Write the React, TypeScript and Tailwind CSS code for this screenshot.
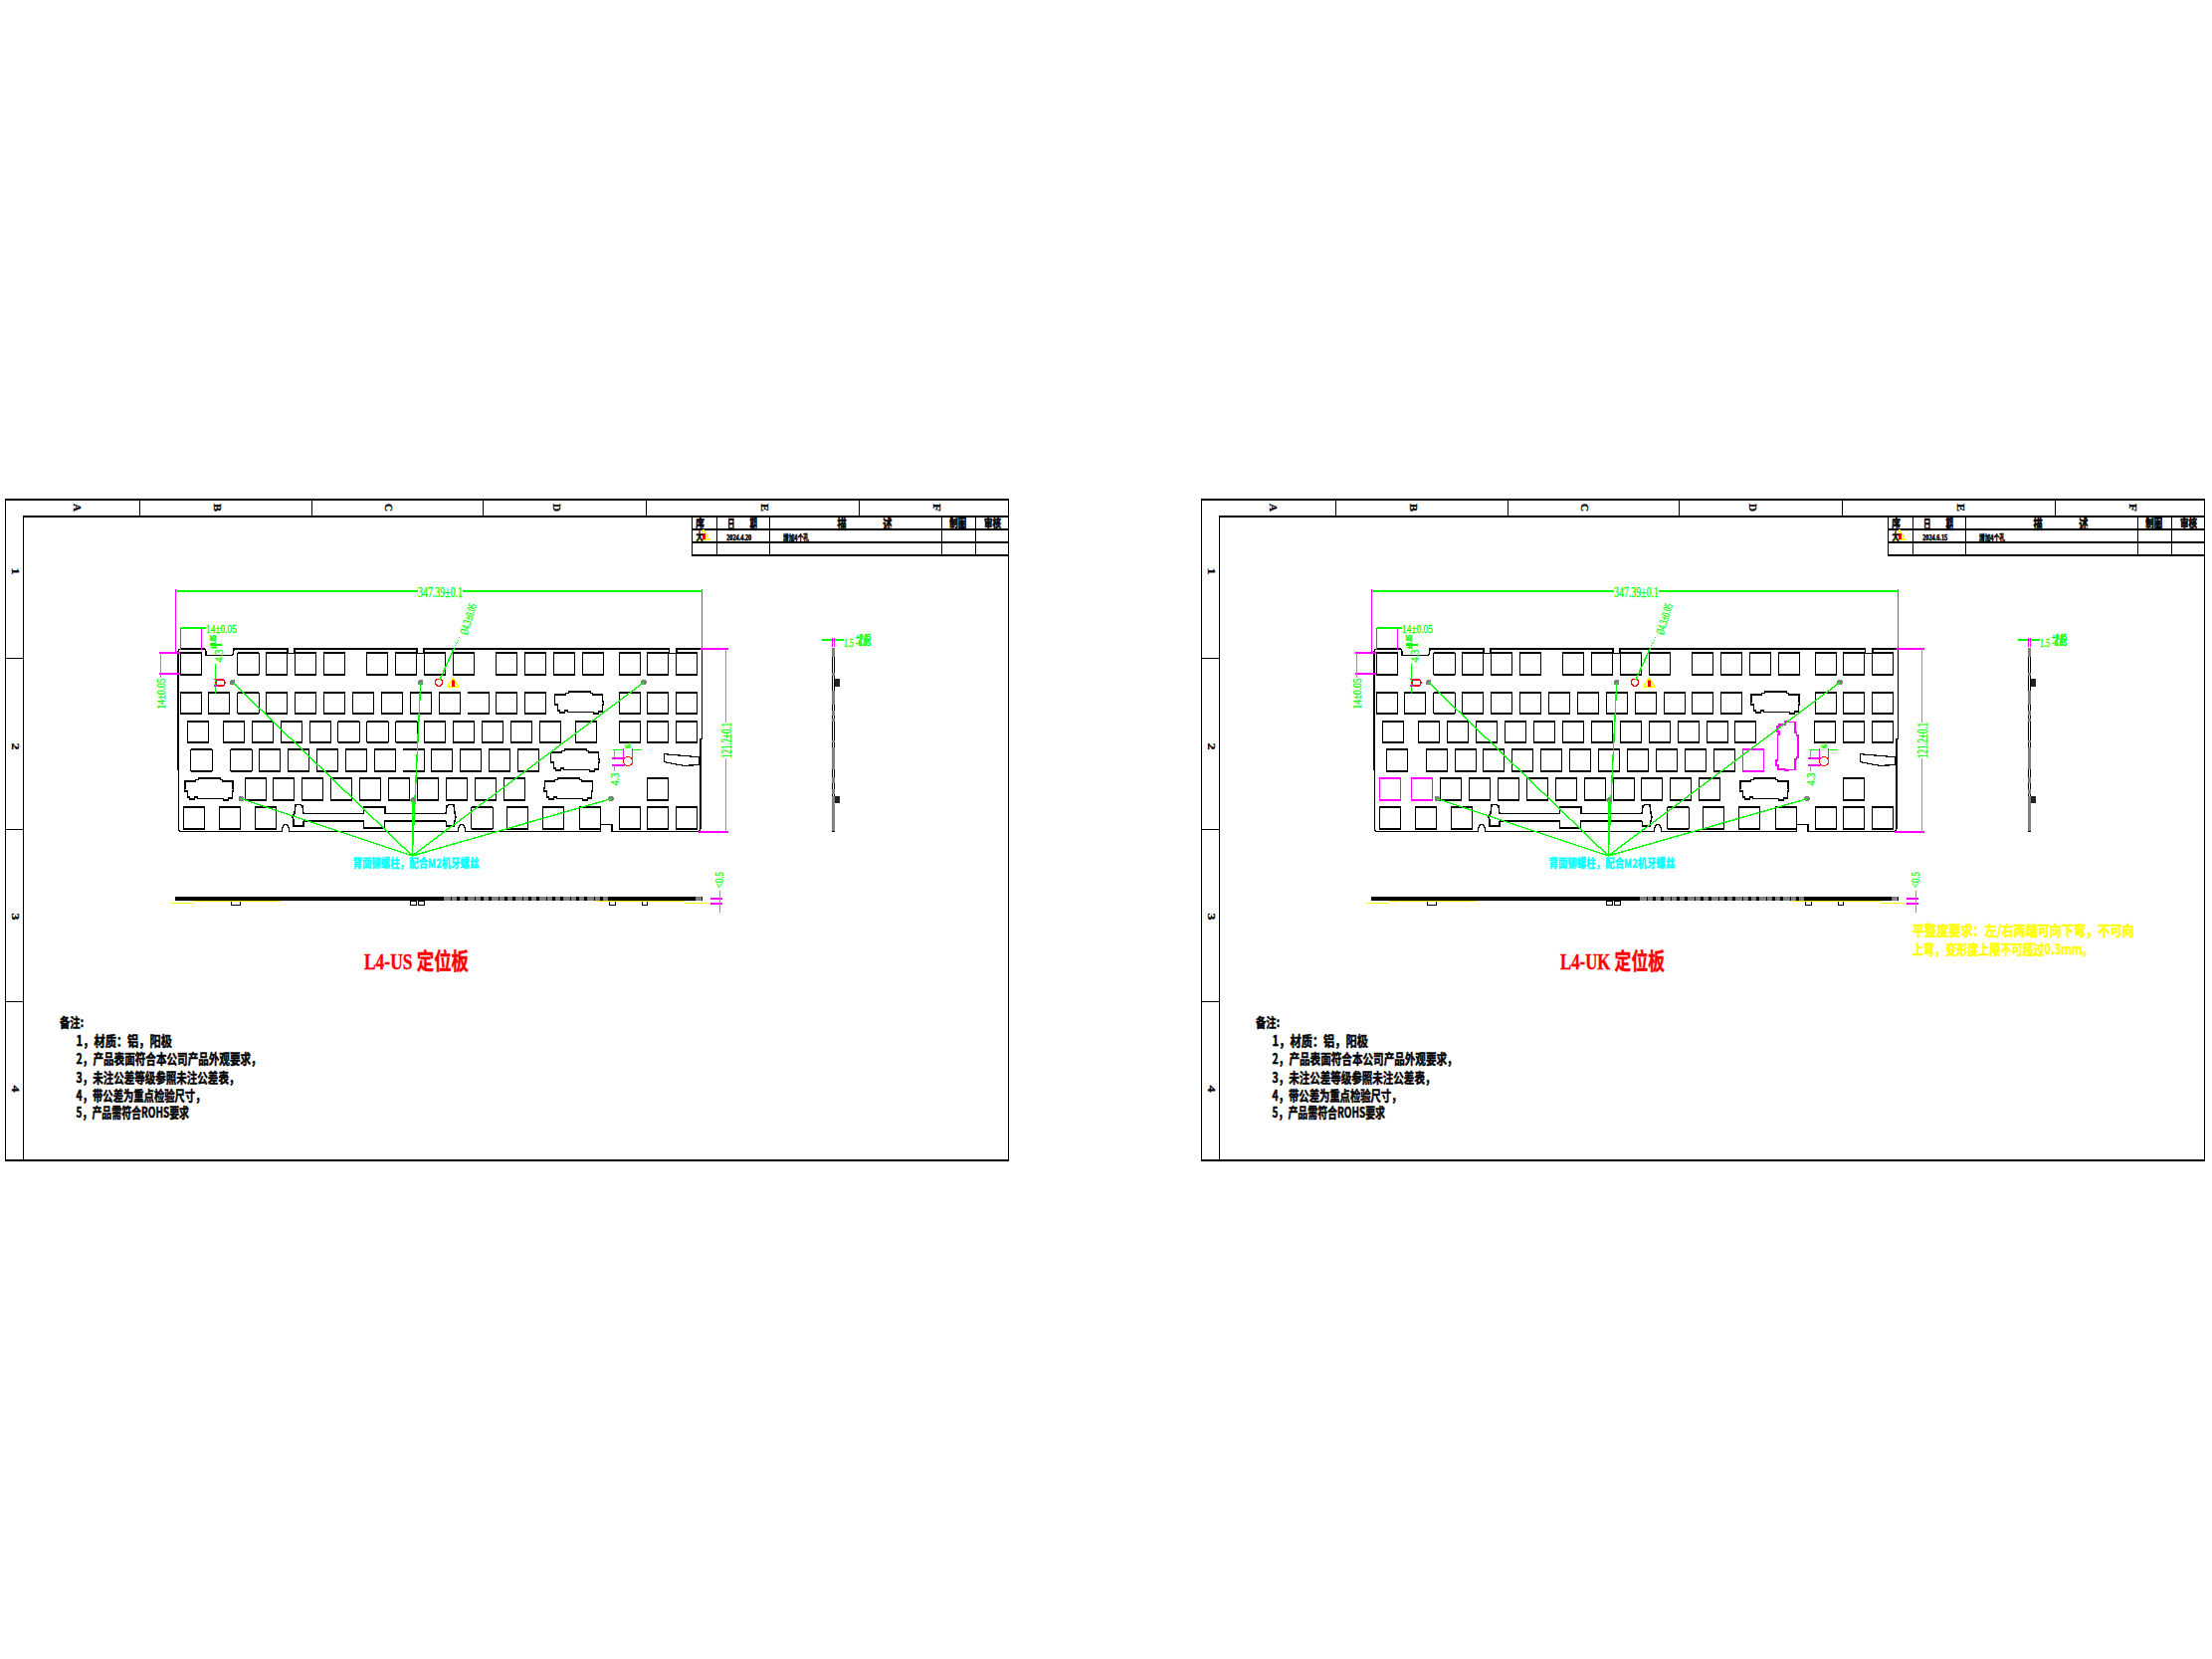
import React from "react";

const INK = "#000000";
const GREEN = "#00ff00";
const PINK = "#ff00ff";
const RED = "#ff0000";
const YELLOW = "#ffff00";
const CYAN = "#00ffff";
const GREY = "#808080";

const KEY = 21.5;
const CJK = "'Liberation Serif','Noto Sans CJK SC',serif";
const CJK_BOLD = "'Noto Sans CJK SC',sans-serif";

// key rows, left edges of each switch hole
const ROW_Y = [656, 695.5, 724.5, 753, 782, 811];
const TOP_ROW = [181.3, 238.7, 267.3, 296.3, 325.3, 368.3, 397.3, 426.3, 455.3, 498.3, 527.3, 556.3, 585.3, 622.3, 650.3, 679.3];
const NUM_ROW = [181.3, 209.3, 238.7, 267.3, 296.3, 325.3, 354.3, 383.3, 412.3, 441.3, 470.3, 498.3, 527.3, 622.3, 650.3, 679.3];
const BOTTOM_ROW = [184.3, 220.3, 256.3, 473.7, 509.3, 545.3, 582.3, 622.3, 650.3, 679.3];

const US_ROWS = {
  r2: [188.3, 224.3, 253.3, 282.3, 311.3, 339.7, 368.7, 397.7, 426.3, 455.3, 484.3, 513.3, 542.3, 578.3, 622.3, 650.3, 679.3],
  r3: [191.7, 231.7, 260.3, 289.3, 318.3, 347.3, 376.3, 405.3, 433.3, 462.3, 491.3, 520.3],
  r4: [246, 274.3, 303.3, 332.3, 361.3, 390.3, 419.3, 448.3, 477.3, 506.3, 650.3],
};
const UK_ROWS = {
  r2: [187.3, 223.3, 252.3, 281.3, 310.3, 339.3, 368.3, 397.3, 426.3, 455.3, 484.3, 513.3, 541.3, 621.3, 650.3, 679.3],
  r3: [191.3, 231.3, 260.3, 288.3, 317.3, 346.3, 375.3, 404.3, 433.3, 462.3, 491.3, 520.3],
  r4: [245, 274, 303, 332.3, 361.3, 390.3, 419.3, 447.3, 476.3, 505.3, 650.3],
};

const STAB = "M0.5,3 H11 V1.5 H14 V0 H36 V1.5 H38 V3 H48.5 V10 H49 V13 H48 V20 H44 V22 H39 V20.5 H13 V19 H10 V21 H5 V19 H3 V13 H0 V10 H0.5 Z";

const PLATE =
  "M179,655 Q179,652 182,652 H205 Q207,652 207,655 V658.3 H233 Q235,658 235,652 H289 V656.7 H296 V652 H419 V656.7 H426 V652 H672.5 V656.7 H680 V652 H705.7 V742.7 H704 V833 L702,835.7 H615 V828.3 H603.5 V835.7 H468 Q467,828 464,828 Q461,828 460,835.7 H291 Q290,828 287,828 Q284,828 283,835.7 H182 Q179.5,835.7 179.5,833 V773 H179 Z";

const SPACE_BAR =
  "M305,817.7 H365.7 V811 H387 V817.7 H448 M305,825 H365.7 V832 H386.7 V825 H448 " +
  "M305,817.7 L304,810 L301,808.3 L297,809 L296,817 L294,821 L295,824 L295,830 H305 V825 " +
  "M448,817.7 L449,810 L452,808.3 L456,809 L457,817 L458,821 L457,825 L456,830 H449 L448,825";

const SLOT = "M667.3,757.7 L702.3,760.7 V768.7 L686.7,769.3 L667.7,765.7 Z";

const SCREWS = [
  [233.7, 685.7],
  [422.7, 685.7],
  [647, 685.7],
  [242.3, 802.7],
  [415, 804],
  [614, 802.7],
];

const SIDE_GREY = [
  [651, 660],
  [676, 679],
  [694, 708],
  [714, 719],
  [722, 725],
  [744, 746],
  [751, 773],
  [781, 787],
  [793, 798],
  [800, 835],
];

const NOTES = [
  { text: "1，材质：铝，阳极", y: 1044.7, end: 173 },
  { text: "2，产品表面符合本公司产品外观要求，", y: 1063, end: 262.7 },
  { text: "3，未注公差等级参照未注公差表，", y: 1081.7, end: 240.4 },
  { text: "4，带公差为重点检验尺寸，", y: 1099.7, end: 206.5 },
  { text: "5，产品需符合ROHS要求", y: 1117.3, end: 190 },
];

const Hl = ({ x1, x2, y, c = INK, w = 2 }: { x1: number; x2: number; y: number; c?: string; w?: number }) => (
  <line x1={x1} x2={x2} y1={y} y2={y} stroke={c} strokeWidth={w} />
);

const Vl = ({ x, y1, y2, c = INK, w = 1 }: { x: number; y1: number; y2: number; c?: string; w?: number }) => (
  <line x1={x} x2={x} y1={y1} y2={y2} stroke={c} strokeWidth={w} />
);

type LabelProps = {
  x: number;
  y: number;
  w: number;
  size: number;
  c?: string;
  rot?: number;
  font?: string;
  bold?: boolean;
  heavy?: number;
  children: React.ReactNode;
};

// all text is squeezed to the measured width, the drawing's font is a narrow one
const Label = ({ x, y, w, size, c = INK, rot = 0, font = CJK, bold = false, heavy = 0.3, children }: LabelProps) => (
  <text
    x={x}
    y={y}
    fontSize={size}
    fontFamily={font}
    fontWeight={bold ? 700 : 400}
    fill={c}
    stroke={c}
    strokeWidth={heavy}
    textAnchor="middle"
    dominantBaseline="central"
    textLength={w}
    lengthAdjust="spacingAndGlyphs"
    transform={rot ? `rotate(${rot} ${x} ${y})` : undefined}
  >
    {children}
  </text>
);

const Key = ({ x, y, c = INK, open = false }: { x: number; y: number; c?: string; open?: boolean }) => (
  <g>
    <Hl x1={x} x2={x + KEY} y={y} c={c} />
    <Hl x1={x} x2={x + KEY} y={y + KEY} c={c} />
    {!open && <Vl x={x} y1={y} y2={y + KEY} c={c} />}
    <Vl x={x + KEY} y1={y} y2={y + KEY} c={c} />
  </g>
);

const Frame = () => (
  <g>
    <Hl x1={5} x2={1014} y={502} />
    <Hl x1={23} x2={1014} y={519} />
    <Hl x1={5} x2={1014} y={1166} />
    <Vl x={5.5} y1={502} y2={1166} />
    <Vl x={23.5} y1={519} y2={1166} />
    <Vl x={1013.5} y1={502} y2={1166} />
    {[140.7, 313.7, 485.3, 649.7, 863.3].map((x) => (
      <Vl key={x} x={x} y1={502} y2={519} />
    ))}
    {[661, 833.7, 1006].map((y) => (
      <Hl key={y} x1={5} x2={24} y={y} w={1} />
    ))}
    {[
      ["A", 78],
      ["B", 219],
      ["C", 391],
      ["D", 560],
      ["E", 769],
      ["F", 942],
    ].map(([t, x]) => (
      <Label key={t} x={x as number} y={510} w={8} size={11} rot={90} bold>
        {t}
      </Label>
    ))}
    {[
      ["1", 574],
      ["2", 750],
      ["3", 921],
      ["4", 1094],
    ].map(([t, y]) => (
      <Label key={t} x={15.7} y={y as number} w={7} size={11} rot={90} bold>
        {t}
      </Label>
    ))}
  </g>
);

const Warning = ({ x, y }: { x: number; y: number }) => (
  <g>
    <polygon points={`${x},${y - 5} ${x + 5.5},${y + 4} ${x - 5.5},${y + 4}`} fill="#ffffff" stroke={YELLOW} strokeWidth={1.5} />
    <rect x={x - 1} y={y - 2.5} width={2.5} height={6} fill={RED} />
  </g>
);

const TitleBlock = ({ date }: { date: string }) => (
  <g>
    {[531.7, 544.7, 557.7].map((y) => (
      <Hl key={y} x1={695} x2={1014} y={y} />
    ))}
    {[695, 720.3, 773.3, 946.3, 980.3].map((x) => (
      <Vl key={x} x={x} y1={519} y2={557.7} />
    ))}
    <Label x={703.5} y={525.3} w={9} size={13} font={CJK_BOLD} bold heavy={0.6}>序</Label>
    <Label x={746} y={525.3} w={30} size={13} font={CJK_BOLD} bold heavy={0.6}>日　　期</Label>
    <Label x={869} y={525.3} w={55} size={13} font={CJK_BOLD} bold heavy={0.6}>描　　　　述</Label>
    <Label x={962.7} y={525.3} w={17} size={11} font={CJK_BOLD} bold heavy={0.6}>制图</Label>
    <Label x={997.5} y={525.3} w={17} size={11} font={CJK_BOLD} bold heavy={0.6}>审核</Label>
    <Warning x={707} y={538} />
    <Label x={703} y={538.5} w={7} size={10} font={CJK_BOLD} bold heavy={0.5}>大</Label>
    <Label x={742.7} y={540} w={25} size={8} bold heavy={0.5}>{date}</Label>
    <Label x={800} y={540.5} w={26} size={9} font={CJK_BOLD} bold heavy={0.5}>增加4个孔</Label>
  </g>
);

const Dimensions = () => (
  <g>
    {/* overall width */}
    <Vl x={176.7} y1={592} y2={655} c={PINK} />
    <Vl x={705.7} y1={592} y2={652} c={PINK} />
    <Hl x1={176.7} x2={420} y={594} c={GREEN} />
    <Hl x1={465} x2={705.7} y={594} c={GREEN} />
    <Label x={442.5} y={595} w={45} size={14} c={GREEN}>347.39±0.1</Label>

    {/* key hole size */}
    <Vl x={181.5} y1={631} y2={653} c={PINK} />
    <Vl x={202.7} y1={631} y2={653} c={PINK} />
    <Hl x1={181.5} x2={207} y={631} c={GREEN} />
    <Label x={222.5} y={631} w={31} size={13} c={GREEN}>14±0.05</Label>
    <Hl x1={159.5} x2={181} y={655.7} c={PINK} />
    <Hl x1={159.5} x2={181} y={676.7} c={PINK} />
    <Vl x={161} y1={656} y2={681} c={GREEN} />
    <Label x={161} y={697} w={31} size={13} c={GREEN} rot={-90}>14±0.05</Label>

    {/* small hole top left */}
    <Label x={219.5} y={659} w={13} size={13} c={GREEN} rot={-90}>4.3</Label>
    <Label x={214} y={645} w={14} size={8} c={GREEN} rot={-90} bold heavy={0.5}>±0.05</Label>
    <Hl x1={211} x2={223} y={648} c={GREEN} w={2} />
    <Vl x={216.7} y1={667} y2={697} c={GREEN} />
    <Hl x1={215} x2={225} y={682.7} c={PINK} w={1.5} />
    <Hl x1={215} x2={225} y={689} c={PINK} w={1.5} />
    <rect x={217} y={683} width={9} height={6} rx={3} fill="none" stroke={RED} strokeWidth={1.2} />

    {/* round hole with leader */}
    <circle cx={441} cy={685.7} r={3.5} fill="none" stroke={RED} strokeWidth={1.2} />
    <line x1={442} y1={683} x2={456} y2={652} stroke={GREEN} strokeWidth={1.5} />
    <line x1={456} y1={652} x2={463} y2={638} stroke={GREEN} strokeWidth={1} strokeDasharray="1.5 1.5" />
    <Label x={470.5} y={622} w={32} size={12} c={GREEN} rot={-73}>Ø4.3±0.05</Label>
    <Warning x={455.3} y={686} />
    <Label x={455.5} y={686.5} w={3} size={8} c={RED} bold>1</Label>

    {/* overall height */}
    <Hl x1={704} x2={732} y={651.7} c={PINK} />
    <Hl x1={702} x2={732} y={835.7} c={PINK} />
    <Vl x={729.7} y1={652} y2={726} c={GREEN} />
    <Vl x={729.7} y1={762} y2={836} c={GREEN} />
    <Label x={730.7} y={744} w={36} size={14} c={GREEN} rot={-90}>121.2±0.1</Label>

    {/* slot hole */}
    <circle cx={631} cy={765} r={4.5} fill="none" stroke={RED} strokeWidth={1.2} />
    <Hl x1={615} x2={628} y={761.7} c={PINK} />
    <Hl x1={615} x2={628} y={768.7} c={PINK} />
    <Vl x={626.7} y1={752} y2={763} c={PINK} />
    <Vl x={635.7} y1={752} y2={768} c={PINK} />
    <Hl x1={615.7} x2={627} y={753.7} c={GREEN} w={1} />
    <Hl x1={635.7} x2={645} y={753.7} c={GREEN} w={1} />
    <Vl x={617} y1={753} y2={761} c={GREEN} />
    <Vl x={617} y1={769} y2={775} c={GREEN} />
    <Label x={617} y={783} w={13} size={13} c={GREEN} rot={-90}>4.3</Label>
    <Label x={631.5} y={749} w={6} size={8} c={GREEN} rot={-90} bold>6.</Label>
  </g>
);

const Leaders = () => (
  <g>
    {SCREWS.map(([x, y]) => (
      <g key={`${x}-${y}`}>
        <circle cx={x} cy={y} r={2.8} fill={GREY} />
        <line x1={414.3} y1={860} x2={x} y2={y} stroke={GREEN} strokeWidth={1.4} />
      </g>
    ))}
    <Label x={418} y={866} w={127} size={12} c={CYAN} font={CJK_BOLD} bold heavy={0.4}>背面铆螺柱，配合M2机牙螺丝</Label>
  </g>
);

const SideView = () => (
  <g>
    <Hl x1={826} x2={848} y={642.7} c={GREEN} />
    <Vl x={836} y1={641} y2={650} c={PINK} />
    <Vl x={838.7} y1={641} y2={650} c={PINK} />
    <Label x={853} y={645} w={10} size={13} c={GREEN}>1.5</Label>
    <Label x={867.5} y={640.5} w={15} size={8} c={GREEN} bold heavy={0.5}>+0.05</Label>
    <Label x={867.5} y={646.7} w={15} size={8} c={GREEN} bold heavy={0.5}>-0.05</Label>
    <Vl x={836} y1={651} y2={836} />
    <Vl x={838.5} y1={651} y2={836} />
    <Hl x1={835.5} x2={839} y={835.5} w={1} />
    {SIDE_GREY.map(([a, b]) => (
      <rect key={a} x={836} y={a} width={3} height={b - a} fill={GREY} />
    ))}
    <rect x={838.7} y={682} width={5.5} height={8} fill="#222222" />
    <rect x={838.7} y={800} width={5.5} height={7} fill="#222222" />
  </g>
);

// grey bars along the edge view are not all the same length
const edgeBar = (x: number) => (x % 24 === 14 ? 7 : 5);

const BottomView = () => (
  <g>
    <rect x={175.5} y={901} width={530.5} height={4} fill={INK} />
    {Array.from({ length: 21 }, (_, i) => 446 + i * 8).map((x) => (
      <rect key={x} x={x} y={901} width={edgeBar(x)} height={4} fill={GREY} />
    ))}
    <rect x={699} y={901} width={6} height={4} fill={GREY} />
    {[
      [232, 9],
      [412, 6],
      [420, 6],
      [612, 6],
      [645, 5],
    ].map(([x, w]) => (
      <rect key={x} x={x} y={905} width={w} height={4.5} fill="#ffffff" stroke={INK} strokeWidth={1} />
    ))}
    <Hl x1={170.6} x2={193} y={907.3} c={YELLOW} w={1} />
    <Hl x1={193} x2={282} y={905.5} c={YELLOW} w={1} />
    <Hl x1={600} x2={688} y={905.5} c={YELLOW} w={1} />
    <Hl x1={688} x2={712.5} y={907.3} c={YELLOW} w={1} />
    <Hl x1={714} x2={726} y={903.3} c={PINK} />
    <Hl x1={714} x2={726} y={908} c={PINK} />
    <Vl x={723.7} y1={895} y2={917} c={GREEN} />
    <Label x={723} y={884} w={16} size={12} c={GREEN} rot={-90}>&lt;0.5</Label>
  </g>
);

const Sheet = ({ uk = false }: { uk?: boolean }) => {
  const rows = uk ? UK_ROWS : US_ROWS;
  return (
    <svg className="h-[670px] w-[1020px] shrink-0" viewBox="0 500 1020 670" shapeRendering="crispEdges" fill="none">
      <Frame />
      <TitleBlock date={uk ? "2024.6.15" : "2024.4.20"} />

      {/* plate outline */}
      <path d={PLATE} stroke={INK} strokeWidth={1.3} />
      <path d={SPACE_BAR} stroke={INK} strokeWidth={1.5} />
      <path d={SLOT} stroke={INK} strokeWidth={1.2} />

      {TOP_ROW.map((x) => <Key key={x} x={x} y={ROW_Y[0]} />)}
      {NUM_ROW.map((x) => <Key key={x} x={x} y={ROW_Y[1]} open={!uk && x === 470.3} />)}
      {rows.r2.map((x) => <Key key={x} x={x} y={ROW_Y[2]} />)}
      {rows.r3.map((x) => <Key key={x} x={x} y={ROW_Y[3]} open={!uk && x === 405.3} />)}
      {rows.r4.map((x) => <Key key={x} x={x} y={ROW_Y[4]} />)}
      {BOTTOM_ROW.map((x) => <Key key={x} x={x} y={ROW_Y[5]} />)}

      {/* stabilisers, the UK plate has its enter key drawn in pink */}
      <path transform="translate(557.3 695)" d={STAB} stroke={INK} strokeWidth={1.4} />
      <path transform="translate(546.7 782)" d={STAB} stroke={INK} strokeWidth={1.4} />
      {uk ? (
        <g>
          <Key x={184} y={ROW_Y[4]} c={PINK} />
          <Key x={216.3} y={ROW_Y[4]} c={PINK} />
          <Key x={549.3} y={ROW_Y[3]} c={PINK} />
          <path transform="translate(605 725) rotate(90)" d={STAB} stroke={PINK} strokeWidth={1.6} />
        </g>
      ) : (
        <g>
          <path transform="translate(185.3 782)" d={STAB} stroke={INK} strokeWidth={1.4} />
          <path transform="translate(553.3 753)" d={STAB} stroke={INK} strokeWidth={1.4} />
        </g>
      )}

      <Dimensions />
      <Leaders />
      <SideView />
      <BottomView />

      <Label x={418.5} y={966} w={105} size={23} c={RED} bold heavy={0.4}>{uk ? "L4-UK 定位板" : "L4-US 定位板"}</Label>

      <Label x={72} y={1026.7} w={24} size={13} font={CJK_BOLD} bold heavy={0.5}>备注:</Label>
      {NOTES.map((n) => (
        <Label key={n.y} x={(76.6 + n.end) / 2} y={n.y} w={n.end - 76.6} size={14} font={CJK_BOLD} bold heavy={0.5}>
          {n.text}
        </Label>
      ))}

      {uk && (
        <g>
          <Label x={831.3} y={934.3} w={222.7} size={14} c={YELLOW} font={CJK_BOLD} bold heavy={0.5}>平整度要求：左/右两端可向下弯，不可向</Label>
          <Label x={810.8} y={953.3} w={181.6} size={14} c={YELLOW} font={CJK_BOLD} bold heavy={0.5}>上弯，变形度上限不可超过0.3mm。</Label>
        </g>
      )}
    </svg>
  );
};

export default function App() {
  return (
    <div className="flex h-[1667px] w-[2223px] gap-[182px] overflow-hidden bg-white pt-[500px]">
      <Sheet />
      <Sheet uk />
    </div>
  );
}
